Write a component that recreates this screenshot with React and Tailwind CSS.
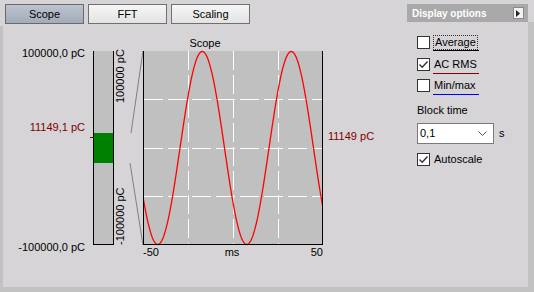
export default function App() {
  const pts = [];
  for (let x = 143.5; x <= 322.5; x += 0.5) {
    const y = 148 - 96.5 * Math.sin((2 * Math.PI * (x - 180)) / 89);
    pts.push(`${x},${y.toFixed(2)}`);
  }

  const Box = ({ checked }) => (
    <div className="w-[13px] h-[13px] bg-white border border-[#333333] flex items-center justify-center shrink-0">
      {checked && (
        <svg width="11" height="11" viewBox="0 0 11 11">
          <path d="M1.5 5.5 L4.2 8.2 L9.5 2.5" fill="none" stroke="#333333" strokeWidth="1.4" />
        </svg>
      )}
    </div>
  );

  return (
    <div className="flex w-[534px] h-[292px] bg-[#d6d4d7] font-['Liberation_Sans',Arial,sans-serif] text-[11px] leading-[13px] text-black">
      <div className="flex flex-col w-[407px]">
        <div className="flex h-[26px] gap-[4px] pl-[5px] pt-[4px]">
          <div className="w-[79px] h-[20px] border border-[#6a6a6a] bg-gradient-to-b from-[#bcc3cf] to-[#a2acba] flex items-center justify-center">
            Scope
          </div>
          <div className="w-[79px] h-[20px] border border-[#707070] bg-gradient-to-b from-[#f6f6f6] to-[#e3e3e3] flex items-center justify-center">
            FFT
          </div>
          <div className="w-[79px] h-[20px] border border-[#707070] bg-gradient-to-b from-[#f6f6f6] to-[#e3e3e3] flex items-center justify-center">
            Scaling
          </div>
        </div>
        <div className="flex-1 border-l-[3px] border-b-[5px] border-[#c2c2c2]">
          <svg width="404" height="261" viewBox="3 26 404 261" className="block" fontSize="11" fontFamily="'Liberation Sans', Arial, sans-serif">
            <text x="85" y="57" textAnchor="end" fill="#000">100000,0 pC</text>
            <text x="85" y="131" textAnchor="end" fill="#800000">11149,1 pC</text>
            <text x="85" y="251" textAnchor="end" fill="#000">-100000,0 pC</text>

            <rect x="93" y="51" width="21" height="194" fill="#c0c0c0" />
            <rect x="94" y="133" width="19" height="30" fill="#008000" />
            <line x1="93.5" y1="51" x2="93.5" y2="245" stroke="#000" />
            <line x1="113.5" y1="51" x2="113.5" y2="245" stroke="#000" />
            <line x1="93" y1="244.5" x2="114" y2="244.5" stroke="#000" />
            <line x1="90" y1="137.5" x2="94" y2="137.5" stroke="#800000" />

            <text transform="translate(124,103) rotate(-90)" fill="#000">100000 pC</text>
            <text transform="translate(124,245) rotate(-90)" fill="#000">-100000 pC</text>

            <line x1="143" y1="51" x2="131" y2="133" stroke="#808080" />
            <line x1="130" y1="163" x2="143" y2="245" stroke="#808080" />

            <text x="205" y="47" textAnchor="middle" fill="#000">Scope</text>

            <rect x="143" y="51" width="180" height="194" fill="#c0c0c0" />
            <g stroke="#ffffff" strokeWidth="1" strokeDasharray="19 5">
              <line x1="188.5" y1="51" x2="188.5" y2="244" />
              <line x1="233.5" y1="51" x2="233.5" y2="244" />
              <line x1="278.5" y1="51" x2="278.5" y2="244" />
              <line x1="144" y1="99.5" x2="322" y2="99.5" />
              <line x1="144" y1="148.5" x2="322" y2="148.5" />
              <line x1="144" y1="196.5" x2="322" y2="196.5" />
            </g>
            <polyline points={pts.join(" ")} fill="none" stroke="#ff0000" strokeWidth="1.3" />
            <line x1="143.5" y1="51" x2="143.5" y2="245" stroke="#000" />
            <line x1="322.5" y1="51" x2="322.5" y2="245" stroke="#000" />
            <line x1="143" y1="244.5" x2="323" y2="244.5" stroke="#000" />

            <text x="143" y="256" fill="#000">-50</text>
            <text x="232" y="256" textAnchor="middle" fill="#000">ms</text>
            <text x="323" y="256" textAnchor="end" fill="#000">50</text>

            <text x="328" y="140" fill="#800000">11149 pC</text>
          </svg>
        </div>
      </div>

      <div className="flex flex-col w-[127px]">
        <div className="h-[22px] pt-[4px]">
          <div className="w-[121px] h-[18px] bg-[#a9a9a9] flex items-center pl-[5px] pr-[4px]">
            <span className="text-white font-bold text-[10px]">Display options</span>
            <div className="ml-auto w-[11px] h-[12px] bg-[#f2f2f2] border border-[#8a8a8a] flex items-center justify-center">
              <svg width="5" height="7" viewBox="0 0 5 7">
                <path d="M0 0 L4 3.5 L0 7 Z" fill="#222" />
              </svg>
            </div>
          </div>
        </div>
        <div className="flex-1 border-r-[6px] border-b-[5px] border-[#c2c2c2] pl-[10px] pt-[14px] flex flex-col">
          <div className="flex items-center h-[13px] gap-[3px]">
            <Box />
            <span className="border border-dotted border-[#333] px-[1px] leading-[13px]">Average</span>
          </div>
          <div className="ml-[16px] mt-[1px] w-[46px] h-[1px] bg-black" />

          <div className="flex items-center h-[13px] gap-[4px] mt-[7px]">
            <Box checked />
            <span>AC RMS</span>
          </div>
          <div className="ml-[16px] mt-[2px] w-[46px] h-[1px] bg-[#800000]" />

          <div className="flex items-center h-[13px] gap-[4px] mt-[5px]">
            <Box />
            <span>Min/max</span>
          </div>
          <div className="ml-[16px] mt-[2px] w-[46px] h-[1px] bg-[#0000ff]" />

          <div className="mt-[9px] h-[13px]">Block time</div>

          <div className="flex items-center mt-[6px] gap-[5px]">
            <div className="w-[77px] h-[21px] bg-white border border-[#7a7a7a] flex items-center pl-[2px] pr-[6px]">
              <span>0,1</span>
              <svg className="ml-auto" width="9" height="6" viewBox="0 0 9 6">
                <path d="M0.5 0.5 L4.5 4.5 L8.5 0.5" fill="none" stroke="#555" strokeWidth="1" />
              </svg>
            </div>
            <span>s</span>
          </div>

          <div className="flex items-center h-[13px] gap-[4px] mt-[9px]">
            <Box checked />
            <span>Autoscale</span>
          </div>
        </div>
      </div>
    </div>
  );
}
